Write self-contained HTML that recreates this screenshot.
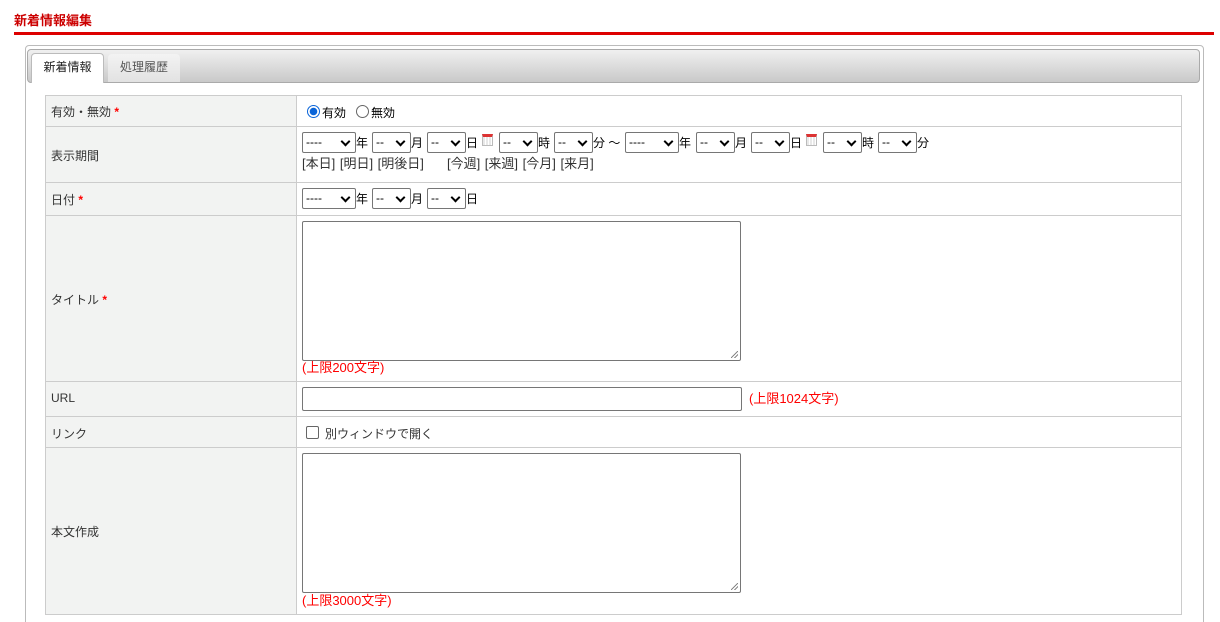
<!DOCTYPE html>
<html><head><meta charset="utf-8">
<style>
*{box-sizing:border-box;margin:0;padding:0}
html,body{width:1220px;height:622px;overflow:hidden}
body{background:#fff;font-family:"Liberation Sans","Noto Sans CJK JP",sans-serif;font-size:12px;color:#333;position:relative}
.a{position:absolute}
.sel{position:absolute;height:21px;border:1px solid #767676;border-radius:2px;background:#fff;font-size:12px;line-height:19px;padding-left:3px;color:#000}
.sel::after{content:"";position:absolute;right:6px;top:5px;width:5px;height:5px;border-right:2px solid #000;border-bottom:2px solid #000;transform:rotate(45deg)}
.t{position:absolute;font-size:12px;color:#000;line-height:14px}
.cal{position:absolute;width:11px;height:12px;border:1px solid #bbb;background:repeating-linear-gradient(90deg,#e8e8e8 0 2px,#fff 2px 3px);border-top:3px solid #d33}
.red{color:#f00}
.st{color:#f00;font-weight:bold}
.hl{position:absolute;left:45px;width:1137px;height:1px;background:#ccc}
.lab{position:absolute;left:51px;font-size:12px;color:#333}
.ta{position:absolute;left:302px;width:439px;height:140px;border:1px solid #767676;border-radius:2px;background:#fff}
.ta::after{content:"";position:absolute;right:2px;bottom:2px;width:7px;height:7px;background:linear-gradient(135deg,transparent 45%,#888 45% 55%,transparent 55% 70%,#888 70% 80%,transparent 80%)}
.note{position:absolute;font-size:13px;color:#f00;line-height:15px}
</style></head><body>
<div class="a" style="left:14px;top:10px;font-size:13px;font-weight:bold;color:#c00">新着情報編集</div>
<div class="a" style="left:14px;top:32px;width:1200px;height:3px;background:#d00"></div>
<div class="a" style="left:25px;top:45px;width:1179px;height:590px;border:1px solid #bbb;border-radius:4px"></div>
<div class="a" style="left:27px;top:49px;width:1173px;height:34px;border:1px solid #aaa;border-radius:4px;background:linear-gradient(#f0f0f0,#c9c9c9)"></div>
<div class="a" style="left:31px;top:53px;width:73px;height:30px;background:#fff;border:1px solid #bbb;border-bottom:none;border-radius:4px 4px 0 0;text-align:center;line-height:27px;font-size:12px;color:#222">新着情報</div>
<div class="a" style="left:108px;top:54px;width:72px;height:28px;background:linear-gradient(#f3f3f3,#e2e2e2);border-radius:4px 4px 0 0;text-align:center;line-height:26px;font-size:12px;color:#555">処理履歴</div>

<div class="a" style="left:45px;top:95px;width:251px;height:520px;background:#f2f3f2"></div>
<div class="a" style="left:45px;top:95px;width:1137px;height:520px;border:1px solid #ccc"></div>
<div class="a" style="left:296px;top:95px;width:1px;height:520px;background:#ccc"></div>
<div class="hl" style="top:126px"></div>
<div class="hl" style="top:182px"></div>
<div class="hl" style="top:215px"></div>
<div class="hl" style="top:381px"></div>
<div class="hl" style="top:416px"></div>
<div class="hl" style="top:447px"></div>

<div class="lab" style="top:103px">有効・無効 <span class="st">*</span></div>
<div class="lab" style="top:147px">表示期間</div>
<div class="lab" style="top:191px">日付 <span class="st">*</span></div>
<div class="lab" style="top:291px">タイトル <span class="st">*</span></div>
<div class="lab" style="top:391px">URL</div>
<div class="lab" style="top:425px">リンク</div>
<div class="lab" style="top:523px">本文作成</div>

<div class="a" style="left:307px;top:105px;width:13px;height:13px;border-radius:50%;border:1px solid #0a64d8;background:radial-gradient(#0a64d8 0 3.5px,#fff 4px)"></div>
<div class="t" style="left:322px;top:106px">有効</div>
<div class="a" style="left:356px;top:105px;width:13px;height:13px;border-radius:50%;border:1px solid #666;background:#fff"></div>
<div class="t" style="left:371px;top:106px">無効</div>

<div class="sel" style="left:302px;top:132px;width:54px">----</div><div class="t" style="left:356px;top:136px">年</div>
<div class="sel" style="left:372px;top:132px;width:39px">--</div><div class="t" style="left:411px;top:136px">月</div>
<div class="sel" style="left:427px;top:132px;width:39px">--</div><div class="t" style="left:466px;top:136px">日</div>
<div class="cal" style="left:482px;top:134px"></div>
<div class="sel" style="left:499px;top:132px;width:39px">--</div><div class="t" style="left:538px;top:136px">時</div>
<div class="sel" style="left:554px;top:132px;width:39px">--</div><div class="t" style="left:593px;top:136px">分 ～</div>
<div class="sel" style="left:625px;top:132px;width:54px">----</div><div class="t" style="left:679px;top:136px">年</div>
<div class="sel" style="left:696px;top:132px;width:39px">--</div><div class="t" style="left:735px;top:136px">月</div>
<div class="sel" style="left:751px;top:132px;width:39px">--</div><div class="t" style="left:790px;top:136px">日</div>
<div class="cal" style="left:806px;top:134px"></div>
<div class="sel" style="left:823px;top:132px;width:39px">--</div><div class="t" style="left:862px;top:136px">時</div>
<div class="sel" style="left:878px;top:132px;width:39px">--</div><div class="t" style="left:917px;top:136px">分</div>
<div class="t" style="left:302px;top:156px;color:#333;font-size:13px;line-height:15px;word-spacing:1px">[本日] [明日] [明後日] &nbsp;&nbsp;&nbsp; [今週] [来週] [今月] [来月]</div>

<div class="sel" style="left:302px;top:188px;width:54px">----</div><div class="t" style="left:356px;top:192px">年</div>
<div class="sel" style="left:372px;top:188px;width:39px">--</div><div class="t" style="left:411px;top:192px">月</div>
<div class="sel" style="left:427px;top:188px;width:39px">--</div><div class="t" style="left:466px;top:192px">日</div>

<div class="ta" style="top:221px"></div>
<div class="note" style="left:302px;top:360px">(上限200文字)</div>

<div class="a" style="left:302px;top:387px;width:440px;height:24px;border:1px solid #767676;border-radius:2px"></div>
<div class="note" style="left:749px;top:391px">(上限1024文字)</div>

<div class="a" style="left:306px;top:426px;width:13px;height:13px;border:1px solid #666;border-radius:2px;background:#fff"></div>
<div class="t" style="left:325px;top:427px;color:#333">別ウィンドウで開く</div>

<div class="ta" style="top:453px"></div>
<div class="note" style="left:302px;top:593px">(上限3000文字)</div>
</body></html>
